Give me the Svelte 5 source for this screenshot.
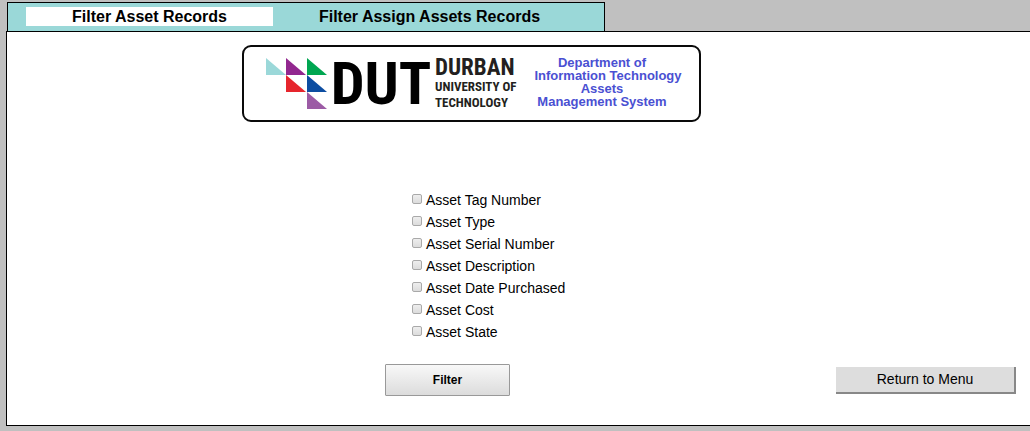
<script>
  const fields = $state([
    { id: 'tag', label: 'Asset Tag Number', checked: false },
    { id: 'type', label: 'Asset Type', checked: false },
    { id: 'serial', label: 'Asset Serial Number', checked: false },
    { id: 'description', label: 'Asset Description', checked: false },
    { id: 'purchased', label: 'Asset Date Purchased', checked: false },
    { id: 'cost', label: 'Asset Cost', checked: false },
    { id: 'state', label: 'Asset State', checked: false },
  ]);
</script>

<nav class="tabs">
  <a class="tab active" href="#assets">Filter Asset Records</a>
  <a class="tab" href="#assigned">Filter Assign Assets Records</a>
</nav>

<main class="panel">
  <div class="banner-row">
    <header class="banner">
      <svg class="mark" viewBox="0 0 61 52" aria-hidden="true">
        <path fill="#9bd8d9" d="M0 0V17H20Z" />
        <path fill="#92278f" d="M20 0V17H40Z" />
        <path fill="#00a651" d="M41 0V17H61Z" />
        <path fill="#e6252d" d="M20 17V34H40Z" />
        <path fill="#0d4da1" d="M41 17V34H61Z" />
        <path fill="#9c5ba5" d="M41 34V51H61Z" />
      </svg>
      <div class="dut">DUT</div>
      <div class="university">
        <span class="durban">DURBAN</span>
        <span class="line">UNIVERSITY OF</span>
        <span class="line">TECHNOLOGY</span>
      </div>
      <div class="department">
        <span>Department of</span>
        <span class="wide">Information Technology</span>
        <span>Assets</span>
        <span>Management System</span>
      </div>
    </header>
  </div>

  <form onsubmit={(e) => e.preventDefault()}>
    <ul class="fields">
      {#each fields as field (field.id)}
        <li>
          <input type="checkbox" id={field.id} bind:checked={field.checked} />
          <label for={field.id}>{field.label}</label>
        </li>
      {/each}
    </ul>
    <div class="actions">
      <div class="primary"><button class="filter" type="submit">Filter</button></div>
      <button class="return" type="button">Return to Menu</button>
    </div>
  </form>
</main>

<style>
  :global(body) {
    background: #c0c0c0;
    font-family: 'Liberation Sans', Arial, sans-serif;
    color: #000;
  }

  .tabs {
    box-sizing: border-box;
    display: flex;
    align-items: center;
    gap: 33px;
    width: 598px;
    max-width: calc(100% - 7px);
    height: 29px;
    margin: 2px 0 0 7px;
    padding: 0 0 2px 18px;
    border: 1px solid #000;
    border-bottom: 0;
    background: #9ad8d8;
  }

  .tab {
    width: 247px;
    font-size: 16px;
    font-weight: bold;
    line-height: 19px;
    text-align: center;
    color: #000;
    text-decoration: none;
  }

  .tab.active {
    background: #fff;
  }

  .panel {
    margin-left: 6px;
    padding: 13px 14px 29px 0;
    border: 1px solid #000;
    border-right: 0;
    background: #fff;
  }

  .banner-row {
    display: flex;
    justify-content: center;
    padding-right: 80px;
  }

  .banner {
    box-sizing: border-box;
    display: flex;
    align-items: center;
    width: 459px;
    height: 77px;
    padding: 0 14px 0 22px;
    border: 2px solid #0a0a0a;
    border-radius: 9px;
  }

  .mark {
    flex: none;
    width: 61px;
    height: 52px;
  }

  .dut,
  .university {
    flex: none;
    font-family: 'Roboto Condensed', 'Open Sans Condensed', 'Noto Sans ExtraCondensed', 'Noto Sans Condensed', Roboto, sans-serif;
    font-weight: bold;
    white-space: nowrap;
  }

  .dut {
    width: 108px;
    font-size: 60px;
    line-height: 60px;
    text-align: center;
  }

  .university {
    width: 84px;
    display: flex;
    flex-direction: column;
    color: #231f20;
  }

  .durban {
    font-size: 23px;
    line-height: 22px;
  }

  .line {
    font-size: 13px;
    line-height: 16px;
  }

  .department {
    flex: 1;
    display: flex;
    flex-direction: column;
    align-items: center;
    padding-bottom: 3px;
    font-size: 13px;
    font-weight: bold;
    line-height: 13px;
    color: #4a50d2;
    white-space: nowrap;
  }

  .wide {
    padding-left: 12px;
  }

  .fields {
    width: 157px;
    margin: 67px auto 0;
    padding: 0 42px 0 0;
    list-style: none;
  }

  .fields li {
    display: flex;
    align-items: center;
    gap: 4px;
    height: 22px;
    font-size: 14px;
    white-space: nowrap;
  }

  input {
    flex: none;
    appearance: none;
    box-sizing: border-box;
    width: 10px;
    height: 10px;
    margin: 0 0 2px;
    border: 1px solid #a9a9a9;
    border-radius: 2px;
    background: linear-gradient(#eee, #dcdcdc);
  }

  input:checked {
    background: #444;
  }

  .actions {
    display: flex;
    align-items: center;
    margin-top: 21px;
  }

  .primary {
    flex: 1;
    display: flex;
    justify-content: center;
    padding-left: 52px;
  }

  button {
    padding: 0;
    font-family: inherit;
    color: #000;
  }

  .filter {
    width: 125px;
    height: 32px;
    border: 1px solid #999;
    border-radius: 1px;
    background: linear-gradient(#f8f8f8, #dcdcdc);
    font-size: 12px;
    font-weight: bold;
  }

  .return {
    width: 180px;
    height: 27px;
    border: solid #888;
    border-width: 0 2px 2px 0;
    background: #ddd;
    font-size: 14px;
  }
</style>
